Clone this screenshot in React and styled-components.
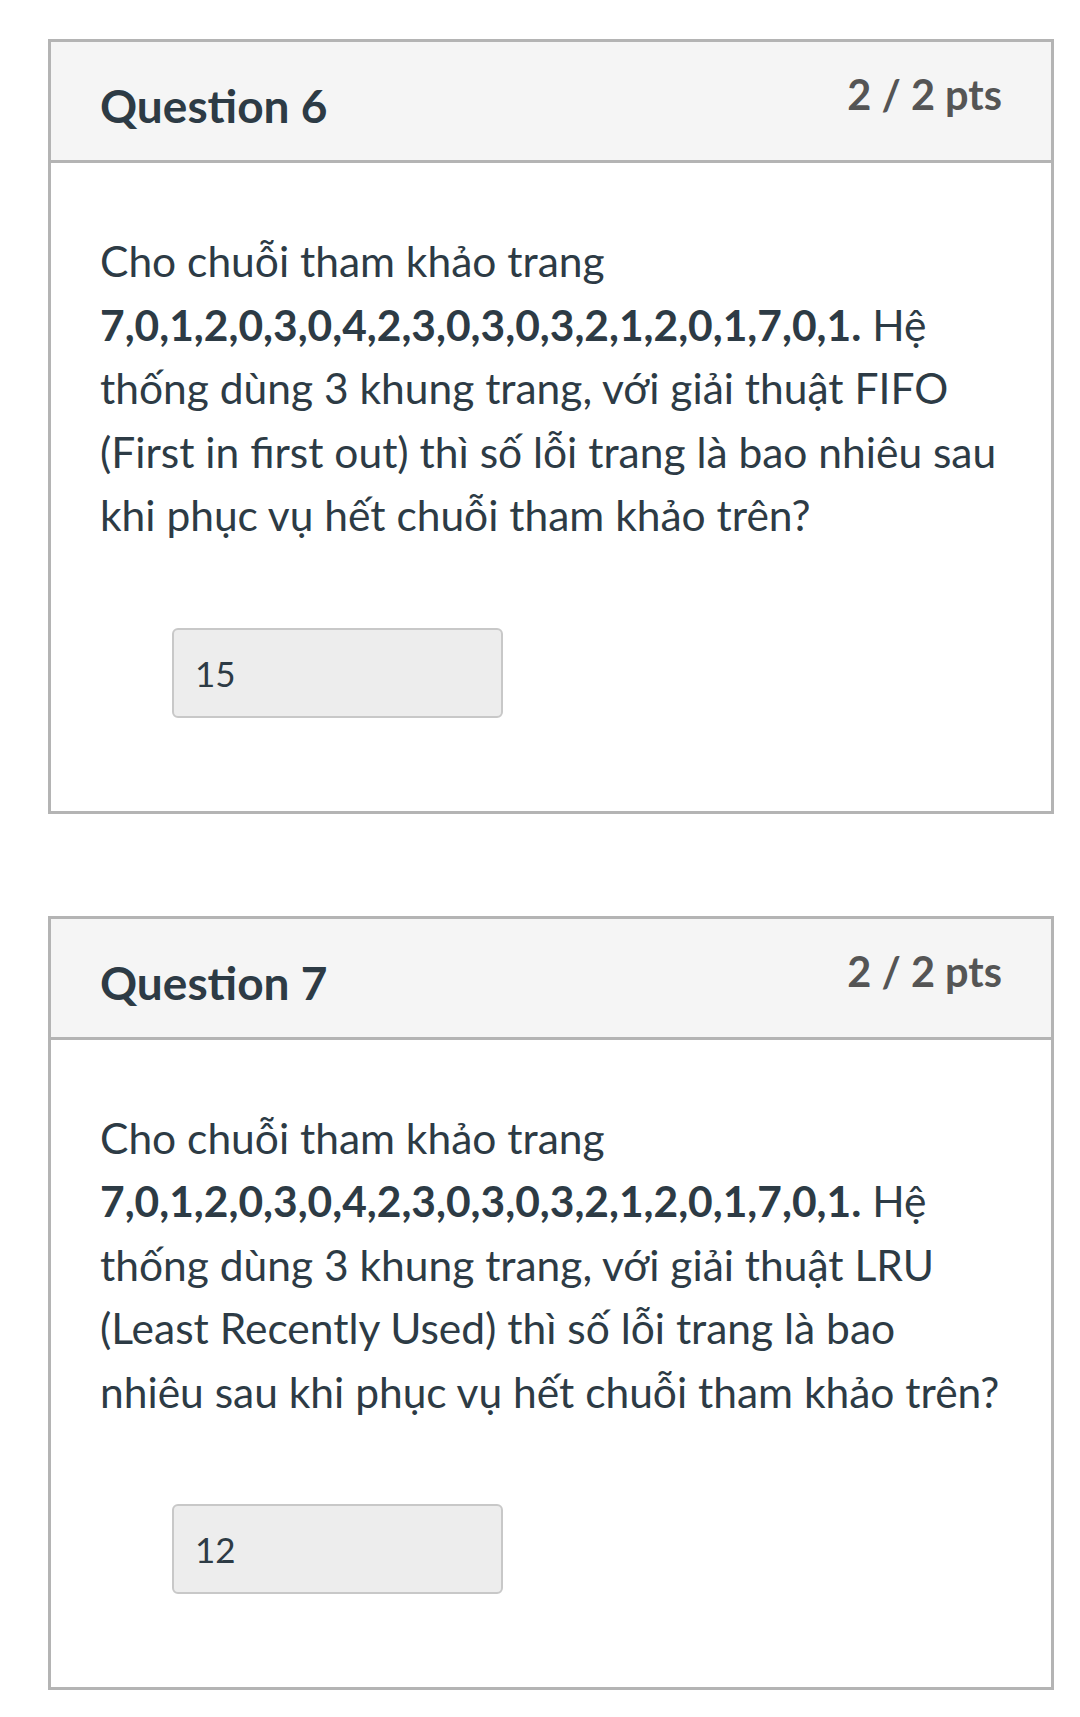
import React from 'react';
import styled, { createGlobalStyle } from 'styled-components';

const GlobalStyle = createGlobalStyle`
  html, body {
    margin: 0;
    padding: 0;
    background: #ffffff;
  }
  body {
    font-family: Lato, "Noto Sans", "Liberation Sans", sans-serif;
    color: #2d3b45;
  }
`;

const Page = styled.div`
  padding: 39px 26px 28px 48px;
  display: flex;
  flex-direction: column;
  gap: 102px;
`;

const QuestionCard = styled.section`
  border: 3px solid #b4b4b4;
  background: #ffffff;
`;

const CardHeader = styled.header`
  height: 121px;
  box-sizing: border-box;
  padding: 28px 49px 0;
  background: #f5f5f5;
  border-bottom: 3px solid #b4b4b4;
  display: flex;
  justify-content: space-between;
  align-items: flex-start;
`;

const QuestionTitle = styled.h2`
  margin: 8px 0 0;
  font-size: 46px;
  font-weight: 700;
  line-height: 1.2;
  color: #2d3b45;
`;

const Points = styled.div`
  font-size: 41.5px;
  font-weight: 700;
  line-height: 1.2;
  color: #555555;
`;

const CardBody = styled.div`
  padding: 66px 49px 93px;
`;

const QuestionText = styled.p`
  margin: 0;
  font-size: 42.5px;
  line-height: 63.5px;
  color: #2d3b45;
`;

const Sequence = styled.strong`
  font-weight: 700;
`;

const AnswerBox = styled.div`
  margin: 81px 0 0 72px;
  width: 331px;
  height: 90px;
  box-sizing: border-box;
  padding: 0 21px;
  display: flex;
  align-items: center;
  background: #ededed;
  border: 2px solid #c8c8c8;
  border-radius: 6px;
  font-size: 35px;
  color: #2d3b45;
`;

const questions = [
  {
    number: 6,
    before: 'Cho chuỗi tham khảo trang ',
    sequence: '7,0,1,2,0,3,0,4,2,3,0,3,0,3,2,1,2,0,1,7,0,1.',
    after:
      ' Hệ thống dùng 3 khung trang, với giải thuật FIFO (First in first out) thì số lỗi trang là bao nhiêu sau khi phục vụ hết chuỗi tham khảo trên?',
    answer: '15',
  },
  {
    number: 7,
    before: 'Cho chuỗi tham khảo trang ',
    sequence: '7,0,1,2,0,3,0,4,2,3,0,3,0,3,2,1,2,0,1,7,0,1.',
    after:
      ' Hệ thống dùng 3 khung trang, với giải thuật LRU (Least Recently Used) thì số lỗi trang là bao nhiêu sau khi phục vụ hết chuỗi tham khảo trên?',
    answer: '12',
  },
];

const App = () => {
  return (
    <>
      <GlobalStyle />
      <Page>
        {questions.map((q) => (
          <QuestionCard key={q.number}>
            <CardHeader>
              <QuestionTitle>Question {q.number}</QuestionTitle>
              <Points>2 / 2 pts</Points>
            </CardHeader>
            <CardBody>
              <QuestionText>
                {q.before}
                <Sequence>{q.sequence}</Sequence>
                {q.after}
              </QuestionText>
              <AnswerBox>{q.answer}</AnswerBox>
            </CardBody>
          </QuestionCard>
        ))}
      </Page>
    </>
  );
};

export default App;
